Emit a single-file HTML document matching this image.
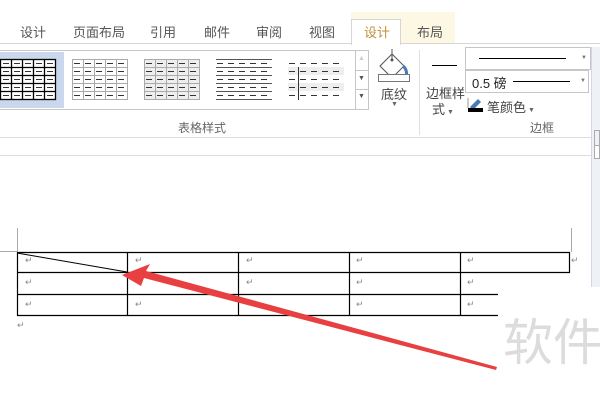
<!DOCTYPE html>
<html><head><meta charset="utf-8"><style>
*{margin:0;padding:0;box-sizing:border-box}
body{width:600px;height:400px;overflow:hidden;background:#fff;position:relative;font-family:"Liberation Sans","Noto Sans CJK SC",sans-serif;color:#444}
.a{position:absolute;white-space:nowrap}
.t{font-size:13px;top:22px;color:#555}
.pm{position:absolute;font-size:9px;color:#888}
</style></head><body>
<!-- tabs -->
<div class="a" style="left:351px;top:12px;width:104px;height:32px;background:#fdf8e4"></div>
<div class="a" style="left:351px;top:19px;width:50px;height:26px;background:#fff;border:1px solid #d6d6d6;border-bottom:none"></div>
<div class="a t" style="left:20px">设计</div>
<div class="a t" style="left:73px">页面布局</div>
<div class="a t" style="left:150px">引用</div>
<div class="a t" style="left:204px">邮件</div>
<div class="a t" style="left:256px">审阅</div>
<div class="a t" style="left:309px">视图</div>
<div class="a t" style="left:364px;color:#c0903a">设计</div>
<div class="a t" style="left:417px">布局</div>
<div class="a" style="left:0;top:43px;width:351px;height:1px;background:#d6d6d6"></div>
<div class="a" style="left:401px;top:43px;width:199px;height:1px;background:#d6d6d6"></div>
<!-- gallery -->
<div class="a" style="left:-1px;top:50px;width:370px;height:60px;border:1px solid #c6c6c6;background:#fff"></div>
<div class="a" style="left:0;top:52px;width:64px;height:56px;background:#c9d8ec"></div>
<div class="a" style="left:355px;top:50px;width:14px;height:60px;border:1px solid #c6c6c6;background:#fff"></div>
<div class="a" style="left:355px;top:70px;width:14px;height:1px;background:#c6c6c6"></div>
<div class="a" style="left:355px;top:89px;width:14px;height:1px;background:#c6c6c6"></div>
<div class="a" style="left:358px;top:55px;font-size:7px;color:#ccc">▲</div>
<div class="a" style="left:358px;top:75px;font-size:7px;color:#555">▼</div>
<div class="a" style="left:358px;top:93px;font-size:7px;color:#555">▼</div>
<svg class="a" style="left:0;top:0" width="360" height="120">
<g stroke="#000" stroke-width="1" fill="#fff"><rect x="0.5" y="59.5" width="55" height="40" stroke-width="1.3"/>
<path d="M0 67.5H56M0 75.5H56M0 83.5H56M0 91.5H56M11.5 59V100M22.5 59V100M33.5 59V100M44.5 59V100" stroke-width="1.3"/></g>
<g stroke="#aaa" fill="none"><rect x="72.5" y="59.5" width="55" height="40"/><path d="M72 67.5H128M72 75.5H128M72 83.5H128M72 91.5H128M83.5 59V100M94.5 59V100M105.5 59V100M116.5 59V100"/></g>
<g stroke="#aaa" fill="none"><rect x="144.5" y="59.5" width="55" height="40" fill="#eee"/><path d="M144 67.5H200M144 75.5H200M144 83.5H200M144 91.5H200M155.5 59V100M166.5 59V100M177.5 59V100M188.5 59V100"/></g>
<g stroke="#555" fill="none"><path d="M216 59.5H272M216 67.5H272M216 75.5H272M216 83.5H272M216 91.5H272M216 99.5H272"/></g>
<rect x="288" y="67" width="56" height="8" fill="#eee"/><rect x="288" y="83" width="56" height="8" fill="#eee"/>
<path d="M298.5 67V100" stroke="#333"/>
<g stroke="#333" stroke-dasharray="5,3" fill="none">
<path d="M1 63.5H55M1 71.5H55M1 79.5H55M1 87.5H55M1 95.5H55" stroke-dasharray="6,5" stroke-dashoffset="-2"/>
<path d="M74 63.5H128M74 71.5H128M74 79.5H128M74 87.5H128M74 95.5H128" stroke-dasharray="6,5"/>
<path d="M146 63.5H200M146 71.5H200M146 79.5H200M146 87.5H200M146 95.5H200" stroke-dasharray="6,5"/>
<path d="M217 63.5H272M217 71.5H272M217 79.5H272M217 87.5H272M217 95.5H272" stroke-dasharray="6,5"/>
<path d="M289 63.5H344M289 71.5H344M289 79.5H344M289 87.5H344M289 95.5H344" stroke-dasharray="6,5"/>
</g></svg>
<!-- 底纹 -->
<svg class="a" style="left:376px;top:48px" width="36" height="36">
<path d="M4 18L16 6L28 18L16 30Z" fill="#fff" stroke="#555"/><circle cx="16" cy="12" r="1.5" fill="#555"/><path d="M16 1V11" stroke="#555"/>
<path d="M27 18Q32 22 30 30" stroke="#4a7ab5" stroke-width="3" fill="none"/>
<rect x="2.5" y="26.5" width="31" height="7" fill="#fff" stroke="#777"/></svg>
<div class="a" style="left:381px;top:84px;font-size:13px">底纹</div>
<div class="a" style="left:391px;top:101px;font-size:7px;color:#666">▼</div>
<div class="a" style="left:419px;top:50px;width:1px;height:85px;background:#e0e0e0"></div>
<!-- borders -->
<div class="a" style="left:432px;top:65px;width:25px;height:1px;background:#000"></div>
<div class="a" style="left:426px;top:83px;font-size:13px">边框样</div>
<div class="a" style="left:432px;top:99px;font-size:13px">式<span style="font-size:7px;color:#666"> ▼</span></div>
<div class="a" style="left:465px;top:47px;width:126px;height:23px;border:1px solid #c6c6c6;background:#fff"></div>
<div class="a" style="left:479px;top:58px;width:87px;height:1px;background:#000"></div>
<div class="a" style="left:581px;top:55px;font-size:6px;color:#777">▼</div>
<div class="a" style="left:465px;top:70px;width:124px;height:23px;border:1px solid #c6c6c6;background:#fff"></div>
<div class="a" style="left:472px;top:73px;font-size:13px;color:#222">0.5 磅</div>
<div class="a" style="left:513px;top:81px;width:57px;height:1px;background:#000"></div>
<div class="a" style="left:580px;top:78px;font-size:6px;color:#777">▼</div>
<svg class="a" style="left:467px;top:96px" width="18" height="16"><path d="M3 11L11 3L14 6L6 14Z" fill="#4a7ab5"/><path d="M1 2V12" stroke="#999"/><rect x="1" y="12" width="15" height="4" fill="#000"/></svg>
<div class="a" style="left:487px;top:97px;font-size:13px">笔颜色<span style="font-size:7px;color:#666"> ▼</span></div>
<div class="a" style="left:178px;top:119px;font-size:12px;color:#666">表格样式</div>
<div class="a" style="left:530px;top:119px;font-size:12px;color:#666">边框</div>
<div class="a" style="left:0;top:137px;width:592px;height:1px;background:#ddd"></div>
<div class="a" style="left:0;top:155px;width:592px;height:1px;background:#ddd"></div>
<div class="a" style="left:591px;top:47px;width:9px;height:240px;background:#eef2f7;border-left:1px solid #cfd8e3"></div>
<div class="a" style="left:594px;top:130px;width:6px;height:25px;border:1px solid #aaa"></div>
<div class="a" style="left:594px;top:145px;width:6px;height:14px;border:1px solid #aaa;background:#fff"></div>
<!-- document -->
<svg class="a" style="left:0;top:0" width="600" height="400">
<path d="M17.5 228V252M0 251.5H17M571.5 228V252" stroke="#aaa"/>
<g stroke="#000" stroke-width="1.2" fill="none">
<path d="M17 252.5H570M17 272.5H570M17 294.5H498M17 315.5H498"/>
<path d="M17.5 252V316M127.5 252V316M238.5 252V316M349.5 252V316M460.5 252V316M569.5 252V273"/>
<path d="M17 253L127 272" stroke-width="1"/>
</g>
<path d="M497 367L146 271L150 264L122 275L141 286L144 278L496 370Z" fill="#e84040"/>
</svg>
<div class="pm" style="left:25px;top:255px">↵</div><div class="pm" style="left:135px;top:255px">↵</div><div class="pm" style="left:246px;top:255px">↵</div><div class="pm" style="left:356px;top:255px">↵</div><div class="pm" style="left:467px;top:255px">↵</div><div class="pm" style="left:571px;top:255px">↵</div>
<div class="pm" style="left:25px;top:277px">↵</div><div class="pm" style="left:246px;top:277px">↵</div><div class="pm" style="left:356px;top:277px">↵</div><div class="pm" style="left:467px;top:277px">↵</div>
<div class="pm" style="left:25px;top:299px">↵</div><div class="pm" style="left:135px;top:299px">↵</div><div class="pm" style="left:356px;top:299px">↵</div><div class="pm" style="left:467px;top:299px">↵</div>
<div class="pm" style="left:17px;top:320px">↵</div>
<div class="a" style="left:503px;top:303px;font-size:50px;color:#dcdcdc">软件</div>
</body></html>
